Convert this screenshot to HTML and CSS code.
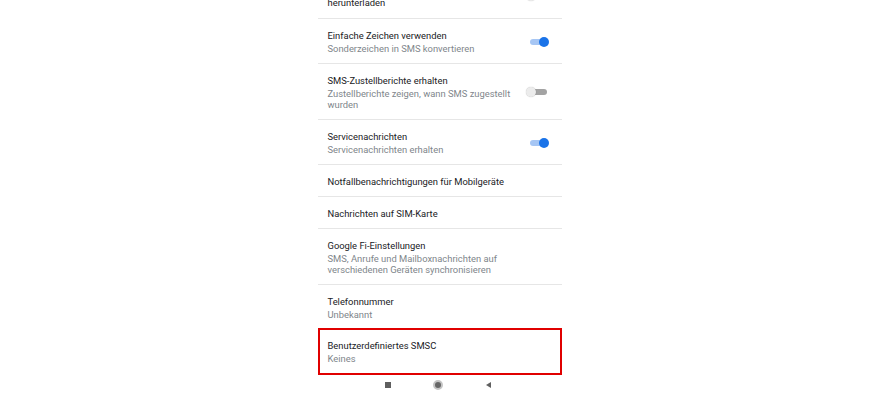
FILE: index.html
```html
<!DOCTYPE html>
<html lang="de">
<head>
    <meta charset="UTF-8">
    <meta name="viewport" content="width=device-width, initial-scale=1.0">
    <title>Erweiterte Einstellungen</title>
    <link rel="stylesheet" href="styles.css">
</head>
<body>
    <div class="screen">
        <div class="row row-first">
            <div class="text">
                <div class="title">Beim Roaming MMS automatisch herunterladen</div>
            </div>
            <span class="toggle"></span>
        </div>
        <div class="row">
            <div class="text">
                <div class="title">Einfache Zeichen verwenden</div>
                <div class="sub">Sonderzeichen in SMS konvertieren</div>
            </div>
            <span class="toggle on"></span>
        </div>
        <div class="row">
            <div class="text">
                <div class="title">SMS-Zustellberichte erhalten</div>
                <div class="sub">Zustellberichte zeigen, wann SMS zugestellt wurden</div>
            </div>
            <span class="toggle"></span>
        </div>
        <div class="row">
            <div class="text">
                <div class="title">Servicenachrichten</div>
                <div class="sub">Servicenachrichten erhalten</div>
            </div>
            <span class="toggle on"></span>
        </div>
        <div class="row row-single">
            <div class="text">
                <div class="title">Notfallbenachrichtigungen für Mobilgeräte</div>
            </div>
        </div>
        <div class="row row-single">
            <div class="text">
                <div class="title">Nachrichten auf SIM-Karte</div>
            </div>
        </div>
        <div class="row">
            <div class="text">
                <div class="title">Google Fi-Einstellungen</div>
                <div class="sub">SMS, Anrufe und Mailboxnachrichten auf verschiedenen Geräten synchronisieren</div>
            </div>
        </div>
        <div class="row row-plain">
            <div class="text">
                <div class="title">Telefonnummer</div>
                <div class="sub">Unbekannt</div>
            </div>
        </div>
        <div class="row row-marked">
            <div class="text">
                <div class="title">Benutzerdefiniertes SMSC</div>
                <div class="sub">Keines</div>
            </div>
        </div>
        <div class="navbar">
            <span class="nav-square"></span>
            <span class="nav-home"></span>
            <span class="nav-back"></span>
        </div>
    </div>
</body>
</html>
```

FILE: styles.css
```css
/* Settings list on a phone screen */
body {
    margin: 0;
    padding: 0;
    background-color: #ffffff;
    font-family: Roboto, "Noto Sans", Arial, sans-serif;
    overflow: hidden;
}
.screen {
    width: 244px;
    margin: 0 auto;
}
.row {
    display: flex;
    align-items: center;
    padding: 10px 13px 9px 10px;
    border-bottom: 1px solid #e6e6e6;
}
.row-first {
    margin-top: -27px;
}
.row-single {
    padding-bottom: 8px;
}
.row-plain {
    border-bottom: none;
    padding-bottom: 8px;
}
.row-marked {
    border: 2px solid #e00000;
    padding: 9px 8px 9px 8px;
}
.text {
    flex: 1;
    min-width: 0;
}
.title {
    font-size: 9.4px;
    line-height: 13px;
    color: #202124;
}
.sub {
    margin-top: 1px;
    font-size: 9.4px;
    line-height: 11px;
    color: #80868b;
}

/* switches */
.toggle {
    position: relative;
    flex: none;
    width: 23px;
    height: 10px;
    margin-left: 8px;
}
.toggle::before {
    content: "";
    position: absolute;
    left: 4px;
    right: 2px;
    top: 2px;
    height: 6px;
    border-radius: 3px;
    background-color: #a3a3a3;
}
.toggle::after {
    content: "";
    position: absolute;
    left: 0;
    top: 0;
    width: 10px;
    height: 10px;
    border-radius: 50%;
    background-color: #ececec;
    box-shadow: 0 0 1px rgba(0, 0, 0, 0.3);
}
.toggle.on::before {
    background-color: #a6c6f4;
}
.toggle.on::after {
    left: auto;
    right: 0;
    background-color: #1a73e8;
    box-shadow: none;
}

/* system navigation */
.navbar {
    display: flex;
    justify-content: center;
    align-items: center;
    height: 20px;
    padding-right: 3px;
}
.nav-square {
    width: 6px;
    height: 6px;
    background-color: #5f5f5f;
}
.nav-home {
    width: 6px;
    height: 6px;
    margin: 0 43px 0 42px;
    border-radius: 50%;
    background-color: #666666;
    border: 2px solid #c4c4c4;
}
.nav-back {
    width: 0;
    height: 0;
    border-top: 3px solid transparent;
    border-bottom: 3px solid transparent;
    border-right: 5px solid #5f5f5f;
}
```
